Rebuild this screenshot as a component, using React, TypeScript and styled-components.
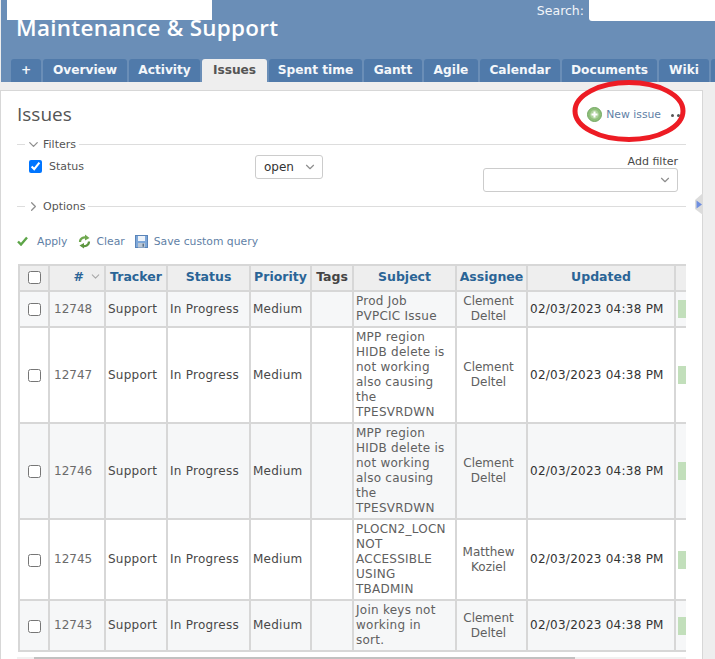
import styled, { createGlobalStyle } from "styled-components";
import { ChevronDown, ChevronRight } from "lucide-react";

const GlobalStyle = createGlobalStyle`
  html, body {
    margin: 0;
    height: 659px;
    overflow: hidden;
    background: #eeeeee;
    font-family: "DejaVu Sans", Verdana, sans-serif;
    font-size: 12px;
    color: #484848;
  }
`;

const Page = styled.div`
  position: relative;
  width: 715px;
  height: 659px;
  overflow: hidden;
`;

const Header = styled.header`
  height: 82px;
  margin-left: 1px;
  background: #6a8eb7;
  display: flex;
  flex-direction: column;
`;

const TopBar = styled.div`
  display: flex;
  justify-content: space-between;
  height: 21px;
  padding-left: 6px;
`;

const Redacted = styled.div`
  width: 205px;
  height: 20px;
  background: #fff;
`;

const SearchBox = styled.div`
  display: flex;
  align-items: flex-start;
  gap: 5px;
  color: #f2f5f9;
  font-size: 12.5px;
  line-height: 22px;
`;

const SearchInput = styled.div`
  width: 126px;
  height: 21px;
  background: #fff;
  border-radius: 0 0 0 3px;
`;

const Title = styled.h1`
  margin: 0;
  padding: 0 0 0 15px;
  height: 38px;
  color: #fff;
  font-family: "Open Sans", sans-serif;
  font-size: 22.4px;
  font-weight: 600;
  line-height: 14px;
  letter-spacing: 0.3px;
`;

const Tabs = styled.nav`
  display: flex;
  gap: 2px;
  padding-left: 10px;
  height: 23px;
`;

const Tab = styled.div<{ $w: number; $active?: boolean }>`
  flex: 0 0 ${(p) => p.$w}px;
  border-radius: 3px 3px 0 0;
  background: ${(p) => (p.$active ? "#eeeeee" : "#507aaa")};
  color: ${(p) => (p.$active ? "#555555" : "#f4f7fa")};
  font-size: 12.2px;
  font-weight: 700;
  line-height: 23px;
  text-align: center;
  white-space: nowrap;
`;

const Panel = styled.main`
  position: relative;
  box-sizing: border-box;
  width: 703px;
  height: 569px;
  margin-top: 8px;
  padding: 0 16px 0 16px;
  background: #fff;
  border: 1px solid #d7d7d7;
  border-width: 1px 1px 0 1px;
`;

const TitleRow = styled.div`
  display: flex;
  justify-content: space-between;
  align-items: center;
  height: 46px;
`;

const PageTitle = styled.h2`
  margin: 0;
  font-family: "Open Sans", sans-serif;
  font-size: 19px;
  font-weight: 400;
  color: #555555;
`;

const Contextual = styled.div`
  display: flex;
  align-items: center;
  color: #5f7fa6;
  font-size: 10.8px;
  margin-top: 1px;
`;

const More = styled.span`
  width: 3px;
  height: 3px;
  margin: 2px 12px 0 10px;
  border-radius: 50%;
  background: #555;
  box-shadow: 6px 0 0 #555;
`;

const LegendRow = styled.div`
  display: flex;
  align-items: center;
  height: 14px;
  color: #555555;
  font-size: 11px;
  &::before {
    content: "";
    flex: 0 0 8px;
    height: 1px;
    background: #dddddd;
  }
  &::after {
    content: "";
    flex: 1;
    height: 1px;
    margin-left: 3px;
    background: #dddddd;
  }
  svg {
    margin: 0 2px 0 1px;
    color: #8e8e8e;
  }
`;

const FilterArea = styled.div`
  display: flex;
  justify-content: space-between;
  height: 44px;
  padding: 4px 8px 0 12px;
`;

const FilterLeft = styled.div`
  display: flex;
  align-items: flex-start;
`;

const StatusLabel = styled.label`
  display: flex;
  align-items: center;
  gap: 7px;
  width: 226px;
  height: 22px;
  font-size: 11px;
  color: #555;
  input {
    margin: 0;
    width: 13px;
    height: 13px;
  }
`;

const FilterRight = styled.div`
  display: flex;
  flex-direction: column;
  align-items: flex-end;
`;

const AddLabel = styled.div`
  font-size: 11px;
  line-height: 12px;
  margin-top: 1px;
`;

const SelectBox = styled.div<{ $w: number }>`
  box-sizing: border-box;
  display: flex;
  justify-content: space-between;
  align-items: center;
  width: ${(p) => p.$w}px;
  height: 24px;
  padding: 0 5px 0 8px;
  border: 1px solid #cccccc;
  border-radius: 3px;
  background: #fff;
  color: #333;
  svg {
    color: #8e8e8e;
  }
`;

const Actions = styled.div`
  display: flex;
  align-items: center;
  height: 16px;
  margin-top: 20px;
  color: #5f7fa6;
  font-size: 10.8px;
`;

const ActionLabel = styled.span<{ $left: number; $right: number }>`
  margin: 0 ${(p) => p.$right}px 0 ${(p) => p.$left}px;
`;

const TableWrap = styled.div`
  width: 669px;
  margin-top: 15px;
  overflow: hidden;
`;

const Table = styled.table`
  table-layout: fixed;
  width: 800px;
  border-collapse: collapse;
  margin-left: 1px;
  font-size: 12px;
  line-height: 15px;
  letter-spacing: 0.25px;
  th, td {
    border: 2px solid #d7d7d7;
    padding: 2px;
    overflow: hidden;
  }
  input {
    display: block;
    margin: 1px auto 0;
    width: 13px;
    height: 13px;
  }
`;

const Th = styled.th<{ $plain?: boolean }>`
  height: 21px;
  background: #eeeeee;
  color: ${(p) => (p.$plain ? "#444444" : "#2a6496")};
  font-size: 12.5px;
  font-weight: 700;
  letter-spacing: 0;
  text-align: center;
  white-space: nowrap;
  && {
    padding: 0 2px 3px;
  }
`;

const SortHead = styled.div`
  display: flex;
  justify-content: flex-end;
  align-items: center;
  gap: 5px;
  svg {
    color: #a9a9a9;
  }
`;

const Row = styled.tr<{ $odd: boolean }>`
  background: ${(p) => (p.$odd ? "#f6f7f8" : "#ffffff")};
`;

const IdCell = styled.td`
  color: #6b6b6b;
  letter-spacing: 0;
  && {
    padding-left: 4px;
  }
`;

const TextCell = styled.td`
  color: #484848;
  white-space: nowrap;
`;

const SubjectCell = styled.td`
  color: #606060;
  && {
    padding-right: 7px;
  }
`;

const AssigneeCell = styled.td`
  color: #606060;
  text-align: center;
  letter-spacing: 0;
  && {
    padding-right: 8px;
  }
`;

const DateCell = styled.td`
  color: #333333;
  white-space: nowrap;
`;

const Bar = styled.div`
  width: 60px;
  height: 18px;
  background: #c2dfbb;
`;

const Scrollbar = styled.div`
  width: 669px;
  height: 4px;
  margin-top: 5px;
  background: #f1f1f1;
`;

const Thumb = styled.div`
  width: 541px;
  height: 4px;
  margin-left: 17px;
  background: #c1c1c1;
`;

const SidebarToggle = styled.div`
  position: absolute;
  right: -1px;
  top: 102px;
  width: 8px;
  height: 22px;
`;

const Marker = styled.svg`
  position: absolute;
  left: 570px;
  top: 78px;
`;

const PlusIcon = () => (
  <svg width="15" height="15" viewBox="0 0 15 15" style={{ marginRight: 4 }}>
    <circle cx="7.5" cy="7.5" r="7" fill="#8fbf7a" stroke="#74a763" />
    <circle cx="7.5" cy="7.5" r="4.4" fill="#aed29c" />
    <path d="M7.5 4.5v6M4.5 7.5h6" stroke="#fff" strokeWidth="2" />
  </svg>
);

const CheckIcon = () => (
  <svg width="11" height="10" viewBox="0 0 11 10">
    <path d="M1 5.5 4 8.5 10 1.5" fill="none" stroke="#5da548" strokeWidth="2.4" />
  </svg>
);

const ReloadIcon = () => (
  <svg width="13" height="15" viewBox="0 0 13 15">
    <path d="M2 8a4.6 4.6 0 0 1 7-4" fill="none" stroke="#6fa84f" strokeWidth="2.2" />
    <path d="M7 0.5 11.5 4 7 6.5Z" fill="#6fa84f" />
    <path d="M11 7.5a4.6 4.6 0 0 1-7 4" fill="none" stroke="#5d9640" strokeWidth="2.2" />
    <path d="M6 9 1.5 11.5 6 14.5Z" fill="#5d9640" />
  </svg>
);

const SaveIcon = () => (
  <svg width="13" height="13" viewBox="0 0 13 13">
    <rect x="0.5" y="0.5" width="12" height="12" fill="#7da7d9" stroke="#5a84b8" />
    <rect x="3" y="1" width="7" height="5" fill="#eef3f9" />
    <rect x="3" y="8" width="7" height="4.5" fill="#b9c6d4" />
    <rect x="7.5" y="8.7" width="1.5" height="3" fill="#5a6f88" />
  </svg>
);

type Issue = { id: number; subject: string; assignee: string };

const issues: Issue[] = [
  { id: 12748, subject: "Prod Job PVPCIC Issue", assignee: "Clement Deltel" },
  { id: 12747, subject: "MPP region HIDB delete is not working also causing the TPESVRDWN", assignee: "Clement Deltel" },
  { id: 12746, subject: "MPP region HIDB delete is not working also causing the TPESVRDWN", assignee: "Clement Deltel" },
  { id: 12745, subject: "PLOCN2_LOCN NOT ACCESSIBLE USING TBADMIN", assignee: "Matthew Koziel" },
  { id: 12743, subject: "Join keys not working in sort.", assignee: "Clement Deltel" },
];

const tabs: [string, number][] = [
  ["+", 30],
  ["Overview", 84],
  ["Activity", 71],
  ["Issues", 65],
  ["Spent time", 93],
  ["Gantt", 58],
  ["Agile", 54],
  ["Calendar", 80],
  ["Documents", 95],
  ["Wiki", 50],
  ["", 30],
];

const App = () => {
  return (
    <Page>
      <GlobalStyle />
      <Header>
        <TopBar>
          <Redacted />
          <SearchBox>
            Search:
            <SearchInput />
          </SearchBox>
        </TopBar>
        <Title>Maintenance &amp; Support</Title>
        <Tabs>
          {tabs.map(([name, w]) => (
            <Tab key={name + w} $w={w} $active={name === "Issues"}>
              {name}
            </Tab>
          ))}
        </Tabs>
      </Header>
      <Panel>
        <TitleRow>
          <PageTitle>Issues</PageTitle>
          <Contextual>
            <PlusIcon />
            New issue
            <More />
          </Contextual>
        </TitleRow>
        <LegendRow>
          <ChevronDown size={15} />
          Filters
        </LegendRow>
        <FilterArea>
          <FilterLeft>
            <StatusLabel>
              <input type="checkbox" defaultChecked />
              <span>Status</span>
            </StatusLabel>
            <SelectBox $w={68}>
              open
              <ChevronDown size={14} />
            </SelectBox>
          </FilterLeft>
          <FilterRight>
            <AddLabel>Add filter</AddLabel>
            <SelectBox $w={195}>
              <ChevronDown size={14} style={{ marginLeft: "auto" }} />
            </SelectBox>
          </FilterRight>
        </FilterArea>
        <LegendRow>
          <ChevronRight size={15} />
          Options
        </LegendRow>
        <Actions>
          <CheckIcon />
          <ActionLabel $left={9} $right={11}>Apply</ActionLabel>
          <ReloadIcon />
          <ActionLabel $left={5} $right={10}>Clear</ActionLabel>
          <SaveIcon />
          <ActionLabel $left={6} $right={0}>Save custom query</ActionLabel>
        </Actions>
        <TableWrap>
          <Table>
            <colgroup>
              <col width={30} />
              <col width={56} />
              <col width={62} />
              <col width={83} />
              <col width={61} />
              <col width={42} />
              <col width={103} />
              <col width={71} />
              <col width={148} />
              <col width={144} />
            </colgroup>
            <thead>
              <tr>
                <Th>
                  <input type="checkbox" />
                </Th>
                <Th>
                  <SortHead>
                    #
                    <ChevronDown size={13} />
                  </SortHead>
                </Th>
                <Th>Tracker</Th>
                <Th>Status</Th>
                <Th>Priority</Th>
                <Th $plain>Tags</Th>
                <Th>Subject</Th>
                <Th>Assignee</Th>
                <Th>Updated</Th>
                <Th />
              </tr>
            </thead>
            <tbody>
              {issues.map((issue, i) => (
                <Row key={issue.id} $odd={i % 2 === 0}>
                  <td>
                    <input type="checkbox" />
                  </td>
                  <IdCell>{issue.id}</IdCell>
                  <TextCell>Support</TextCell>
                  <TextCell>In Progress</TextCell>
                  <TextCell>Medium</TextCell>
                  <td />
                  <SubjectCell>{issue.subject}</SubjectCell>
                  <AssigneeCell>{issue.assignee}</AssigneeCell>
                  <DateCell>02/03/2023 04:38 PM</DateCell>
                  <td>
                    <Bar />
                  </td>
                </Row>
              ))}
            </tbody>
          </Table>
        </TableWrap>
        <Scrollbar>
          <Thumb />
        </Scrollbar>
        <SidebarToggle>
          <svg width="8" height="22" viewBox="0 0 8 22">
            <path d="M8 0 0 7v9l8 6Z" fill="#dcdcdc" />
            <path d="M1.5 7.5 7 11.5 1.5 15.5Z" fill="#6f8fe0" />
          </svg>
        </SidebarToggle>
      </Panel>
      <Marker width="120" height="66" viewBox="0 0 120 66">
        <ellipse cx="59" cy="33" rx="54" ry="28.5" fill="none" stroke="#ed1c24" strokeWidth="5" />
      </Marker>
    </Page>
  );
};

export default App;
